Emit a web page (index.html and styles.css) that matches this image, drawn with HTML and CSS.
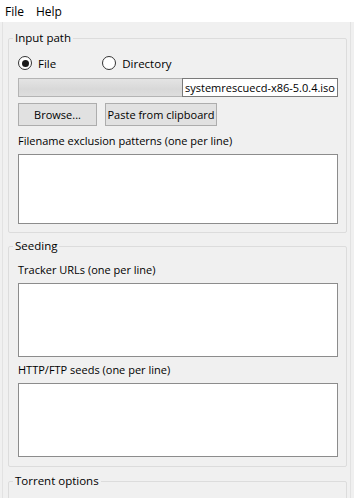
FILE: index.html
```html
<!DOCTYPE html>
<html>

<head>
  <title>Create torrent</title>
  <link rel="stylesheet" href="styles.css">
</head>

<body>

  <div class="menubar">
    <span class="menu-item">File</span>
    <span class="menu-item">Help</span>
  </div>

  <div class="main">

    <!-- Input path -->
    <fieldset class="group">
      <legend class="group-title">Input path</legend>
      <div class="radio-row">
        <label class="radio"><span class="radio-mark checked"></span>File</label>
        <label class="radio"><span class="radio-mark"></span>Directory</label>
      </div>
      <div class="path-field">
        <span class="path-hidden"></span>
        <span class="path-text">systemrescuecd-x86-5.0.4.iso</span>
      </div>
      <div class="button-row">
        <button class="button button-browse">Browse...</button>
        <button class="button button-paste">Paste from clipboard</button>
      </div>
      <p class="field-label">Filename exclusion patterns (one per line)</p>
      <div class="textbox textbox-short"></div>
    </fieldset>

    <!-- Seeding -->
    <fieldset class="group group-seeding">
      <legend class="group-title">Seeding</legend>
      <p class="field-label">Tracker URLs (one per line)</p>
      <div class="textbox"></div>
      <p class="field-label">HTTP/FTP seeds (one per line)</p>
      <div class="textbox"></div>
    </fieldset>

    <!-- Torrent options -->
    <fieldset class="group">
      <legend class="group-title">Torrent options</legend>
      <div class="group-filler"></div>
    </fieldset>

  </div>

</body>

</html>
```

FILE: styles.css
```css
* {
  font-family: "Open Sans", "Noto Sans", sans-serif;
  box-sizing: border-box;
}

html,
body {
  height: 100%;
  overflow: hidden;
}

body {
  margin: 0;
  background-color: #f0f0f0;
  font-size: 11px;
  color: #000000;
}

/* Menu bar */
.menubar {
  height: 22px;
  background-color: #ffffff;
  display: flex;
  align-items: center;
  gap: 12px;
  padding-left: 5px;
  font-size: 12px;
}

/* Main panel */
.main {
  height: calc(100% - 22px);
  margin: 0 3px 0 2px;
  padding: 8px 3px 0 5px;
  border-left: 1px solid #e2e2e2;
  border-right: 1px solid #e2e2e2;
  overflow: hidden;
}

/* Group boxes */
.group {
  display: block;
  margin: 0 0 5px 0;
  padding: 0 8px 8px 9px;
  border: 1px solid #dcdcdc;
  border-radius: 2px;
}

.group-seeding {
  padding-bottom: 9px;
  margin-bottom: 6px;
}

.group-title {
  padding: 0 2px;
  margin-left: -5px;
  line-height: 16px;
  font-size: 11.5px;
}

.group-filler {
  height: 12px;
}

/* Radio buttons */
.radio-row {
  display: flex;
  height: 18px;
  margin-top: 8px;
  align-items: center;
}

.radio {
  display: flex;
  align-items: center;
  gap: 6px;
  font-size: 11.5px;
}

.radio + .radio {
  margin-left: 46px;
}

.radio-mark {
  width: 14px;
  height: 14px;
  border: 1px solid #333333;
  border-radius: 50%;
  background-color: #ffffff;
  display: flex;
  align-items: center;
  justify-content: center;
}

.radio-mark.checked::after {
  content: "";
  width: 7px;
  height: 7px;
  border-radius: 50%;
  background-color: #1a1a1a;
}

/* Path line edit */
.path-field {
  display: flex;
  height: 19px;
  margin-top: 6px;
  border: 1px solid #b4b4b4;
}

.path-hidden {
  flex: 1;
  background: linear-gradient(to bottom, #e4e4e4, #d8d8d8 60%, #dedede);
}

.path-text {
  background-color: #ffffff;
  border: 1px solid #7a7a7a;
  margin: -1px -1px -1px 0;
  padding: 0 2px 0 2px;
  line-height: 17px;
  width: 156px;
  white-space: nowrap;
  overflow: hidden;
}

/* Buttons */
.button-row {
  display: flex;
  gap: 8px;
  margin-top: 6px;
}

.button {
  height: 23px;
  background-color: #e1e1e1;
  border: 1px solid #adadad;
  padding: 0;
  font-size: 11px;
  color: #000000;
  white-space: nowrap;
}

.button-browse {
  width: 79px;
}

.button-paste {
  width: 112px;
}

/* Labels and text boxes */
.field-label {
  margin: 7px 0 0 0;
  line-height: 16px;
}

.group-title + .field-label {
  margin-top: 8px;
}

.textbox + .field-label {
  margin-top: 5px;
}

.textbox {
  height: 74px;
  margin-top: 5px;
  background-color: #ffffff;
  border: 1px solid #8c8c8c;
}

.textbox-short {
  height: 70px;
}
```
